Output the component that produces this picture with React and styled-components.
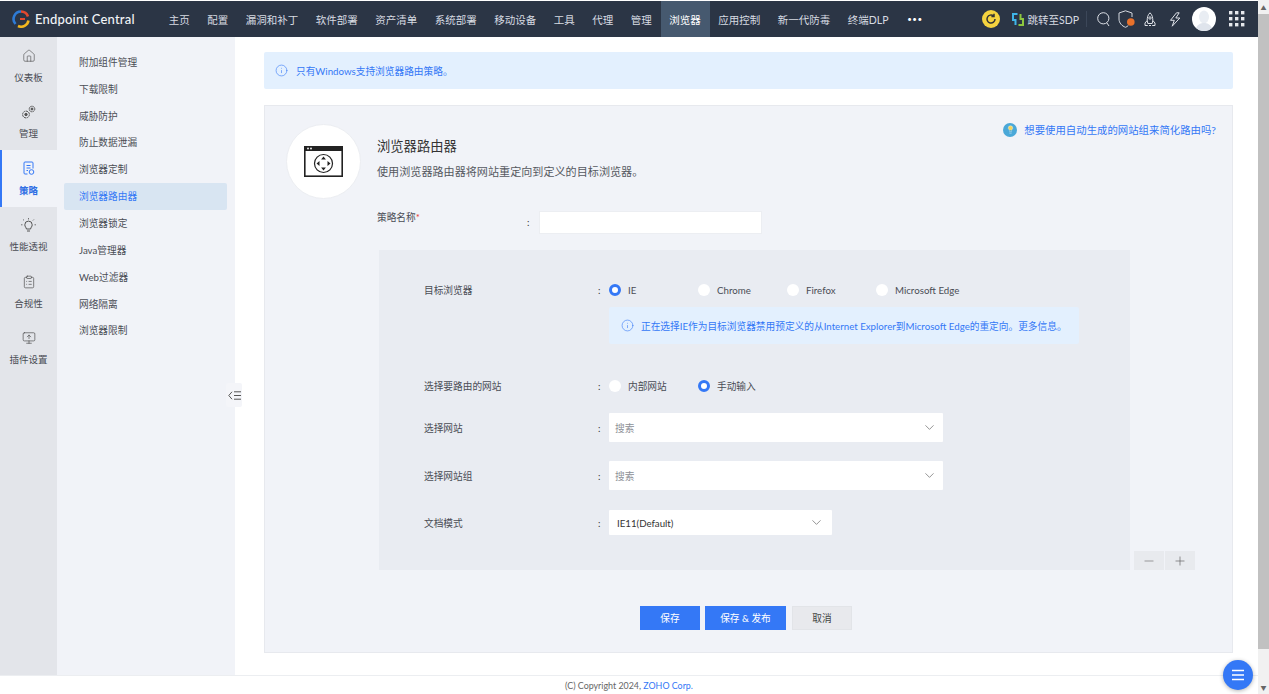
import styled, { createGlobalStyle } from "styled-components";
import { ChevronDown, ClipboardList, House, Info, Lightbulb, Minus, MonitorUp, Plus } from "lucide-react";

const GlobalStyle = createGlobalStyle`
  html, body {
    margin: 0;
    height: 100%;
    overflow: hidden;
    background: #fff;
  }
  body {
    font-family: Lato, "Noto Sans CJK SC", sans-serif;
    font-size: 9.7px;
    color: #4a4d55;
  }
  * {
    box-sizing: border-box;
  }
`;

const navItems = [
  "主页",
  "配置",
  "漏洞和补丁",
  "软件部署",
  "资产清单",
  "系统部署",
  "移动设备",
  "工具",
  "代理",
  "管理",
  "浏览器",
  "应用控制",
  "新一代防毒",
  "终端DLP",
];

const subItems = [
  "附加组件管理",
  "下载限制",
  "威胁防护",
  "防止数据泄漏",
  "浏览器定制",
  "浏览器路由器",
  "浏览器锁定",
  "Java管理器",
  "Web过滤器",
  "网络隔离",
  "浏览器限制",
];

function GearsIcon() {
  return (
    <svg width="15" height="15" viewBox="0 0 15 15" fill="none" stroke="#555" strokeWidth="1">
      <circle cx="5" cy="9.5" r="3.4" strokeDasharray="2 .6" />
      <circle cx="5" cy="9.5" r="1.2" fill="#555" />
      <circle cx="11" cy="4" r="2.8" strokeDasharray="1.6 .6" />
      <circle cx="11" cy="4" r="1" fill="#555" />
    </svg>
  );
}

function PolicyIcon() {
  return (
    <svg width="14" height="15" viewBox="0 0 14 15" fill="none" stroke="#3478f6" strokeWidth="1">
      <path d="M5.5 13H3a1 1 0 0 1-1-1V2a1 1 0 0 1 1-1h7a1 1 0 0 1 1 1v5.5" />
      <path d="M4.5 4.5h4M4.5 7h4M4.5 9.5h1.5" />
      <circle cx="9.5" cy="11" r="2.3" />
    </svg>
  );
}

function BulbRays() {
  return (
    <svg width="15" height="15" viewBox="0 0 15 15" fill="none" stroke="#555" strokeWidth="1">
      <path d="M5.4 11c0-1.5-1.6-2.2-1.6-4.2a3.7 3.7 0 0 1 7.4 0c0 2-1.6 2.7-1.6 4.2z" />
      <path d="M6 13h3M7.5 .2v1.2M1.4 6.800H.2M14.800 6.800h-1.200M3 2.400l-.8-.8M12 2.400l.8-.8" />
    </svg>
  );
}

function RouterIcon() {
  return (
    <svg width="39" height="31" viewBox="0 0 39 31" fill="none">
      <rect x=".8" y=".8" width="37.400" height="29.400" fill="#fff" stroke="#222" strokeWidth="1.600" />
      <rect x="0" y="0" width="39" height="5" fill="#222" />
      <circle cx="4" cy="2.500" r=".9" fill="#fff" />
      <circle cx="7" cy="2.500" r=".9" fill="#fff" />
      <circle cx="19.500" cy="17.500" r="9" stroke="#222" strokeWidth="1.200" />
      <path
        d="M19.500 10.500l2.400 3h-4.800zM19.500 24.500l2.400-3h-4.800zM12.500 17.500l3-2.400v4.800zM26.500 17.500l-3-2.400v4.800z"
        fill="#222"
      />
    </svg>
  );
}

function SdpLogo() {
  return (
    <svg width="12" height="13" viewBox="0 0 12 13" fill="none" strokeWidth="2">
      <path d="M5.500 1H1v6h2.500v5" stroke="#3fb5e8" />
      <path d="M6.500 12H11V6H8.500V1" stroke="#8cc63f" />
    </svg>
  );
}

function SearchIcon() {
  return (
    <svg width="13" height="15" viewBox="0 0 13 15" fill="none" stroke="#dfe2e8" strokeWidth="1">
      <circle cx="6.300" cy="6.300" r="5.600" />
      <path d="M9.800 10.800 12 14" />
    </svg>
  );
}

function ShieldIcon() {
  return (
    <svg width="18" height="18" viewBox="0 0 18 18" fill="none">
      <path
        d="M7.500 .8 1 3v6c0 4 3 7 6.500 8.300 1-.4 2-1 2.800-1.800M7.500 .8 14 3v4"
        stroke="#d5d9e0"
        strokeWidth="1"
      />
      <circle cx="12.800" cy="12" r="3.800" fill="#e8712b" />
    </svg>
  );
}

function RocketIcon() {
  return (
    <svg width="12" height="15" viewBox="0 0 12 15" fill="none" stroke="#dfe2e8" strokeWidth="1">
      <path d="M6 .8C3.800 2.800 3.200 5.500 3.200 8.500l.6 3h4.400l.6-3C8.800 5.500 8.200 2.800 6 .8z" />
      <circle cx="6" cy="6" r="1.200" />
      <path d="M3.200 8.500 1 11v2.500h2.800M8.800 8.500 11 11v2.500H8.200M5 13.500h2" />
    </svg>
  );
}

function BoltIcon() {
  return (
    <svg width="12" height="15" viewBox="0 0 12 15" fill="none" stroke="#dfe2e8" strokeWidth="1">
      <path d="M7.500.8 1.500 8.300h3.800L3.200 14.200 10.800 6H6.800l3.400-5.200z" strokeLinejoin="round" />
    </svg>
  );
}

function AppsIcon() {
  const dots = [];
  for (let r = 0; r < 3; r++) {
    for (let c = 0; c < 3; c++) {
      dots.push(<rect key={`${r}${c}`} x={c * 6} y={r * 6} width="3.400" height="3.400" fill="#e6e8ec" />);
    }
  }
  return (
    <svg width="16" height="16" viewBox="0 0 16 16">
      {dots}
    </svg>
  );
}

function AvatarIcon() {
  return (
    <svg width="24" height="24" viewBox="0 0 24 24">
      <circle cx="12" cy="12" r="12" fill="#fff" />
      <ellipse cx="12" cy="10" rx="5" ry="6.500" fill="#e9edf3" />
      <path d="M4 21c2-4 5-5 8-5s6 1 8 5a12 12 0 0 1-16 0z" fill="#dfe4ec" />
    </svg>
  );
}

function App() {
  return (
    <Screen>
      <GlobalStyle />
      <Page>
        <TopBar>
          <Logo>
            <svg width="18" height="18" viewBox="0 0 18 18" fill="none" strokeWidth="2.600">
              <path d="M9 1.500A7.500 7.500 0 0 0 3.500 14" stroke="#2e7bd6" />
              <path d="M9 1.500A7.500 7.500 0 0 1 16 6.500" stroke="#e2492f" />
              <path d="M16.500 10.500A7.500 7.500 0 0 1 6 16" stroke="#f4b81e" />
              <path d="M8 9h5" stroke="#e2492f" strokeWidth="2" />
            </svg>
            <span>Endpoint Central</span>
          </Logo>
          <Nav>
            {navItems.map((item) => (
              <NavItem key={item} $active={item === "浏览器"}>
                {item}
              </NavItem>
            ))}
            <MoreDots>•••</MoreDots>
          </Nav>
          <TopActions>
            <Coin>
              <svg width="12" height="12" viewBox="0 0 12 12" fill="none" stroke="#333" strokeWidth="1.500">
                <path d="M10 6a4 4 0 1 1-1.400-3M9 .8v2.600H6.400" />
              </svg>
            </Coin>
            <ActionSlot $gap={12}>
              <SdpLink>
                <SdpLogo />
                <span>跳转至SDP</span>
              </SdpLink>
            </ActionSlot>
            <ActionSlot $gap={7}>
              <Divider />
            </ActionSlot>
            <ActionSlot $gap={10}>
              <SearchIcon />
            </ActionSlot>
            <ActionSlot $gap={8}>
              <ShieldIcon />
            </ActionSlot>
            <ActionSlot $gap={8}>
              <RocketIcon />
            </ActionSlot>
            <ActionSlot $gap={13}>
              <BoltIcon />
            </ActionSlot>
            <ActionSlot $gap={11}>
              <AvatarIcon />
            </ActionSlot>
            <ActionSlot $gap={13}>
              <AppsIcon />
            </ActionSlot>
          </TopActions>
        </TopBar>

        <Body>
          <Rail>
            <RailItem>
              <RailIcon>
                <House size={14} strokeWidth={1} color="#444" />
              </RailIcon>
              <span>仪表板</span>
            </RailItem>
            <RailItem>
              <RailIcon>
                <GearsIcon />
              </RailIcon>
              <span>管理</span>
            </RailItem>
            <RailItem $active>
              <RailIcon>
                <PolicyIcon />
              </RailIcon>
              <span>策略</span>
            </RailItem>
            <RailItem>
              <RailIcon>
                <BulbRays />
              </RailIcon>
              <span>性能透视</span>
            </RailItem>
            <RailItem>
              <RailIcon>
                <ClipboardList size={14} strokeWidth={1.1} color="#444" />
              </RailIcon>
              <span>合规性</span>
            </RailItem>
            <RailItem>
              <RailIcon>
                <MonitorUp size={14} strokeWidth={1.1} color="#444" />
              </RailIcon>
              <span>插件设置</span>
            </RailItem>
          </Rail>

          <SubMenu>
            {subItems.map((item) => (
              <SubItem key={item} $active={item === "浏览器路由器"}>
                {item}
              </SubItem>
            ))}
            <CollapseHandle>
              <svg width="13" height="9" viewBox="0 0 13 9" fill="none" stroke="#555" strokeWidth="1">
                <path d="M4 .8.800 4.500 4 8.200M6 .8h7M6 4.500h7M6 8.200h7" />
              </svg>
            </CollapseHandle>
          </SubMenu>

          <Main>
            <Notice>
              <Info size={13} strokeWidth={1.1} color="#3478f6" />
              <span>只有Windows支持浏览器路由策略。</span>
            </Notice>

            <Panel>
              <PanelHead>
                <IconCircle>
                  <RouterIcon />
                </IconCircle>
                <HeadText>
                  <Title>浏览器路由器</Title>
                  <Desc>使用浏览器路由器将网站重定向到定义的目标浏览器。</Desc>
                </HeadText>
                <Hint>
                  <HintBulb>
                    <Lightbulb size={9} color="#fff" fill="#f6d55c" strokeWidth={1} />
                  </HintBulb>
                  <span>想要使用自动生成的网站组来简化路由吗?</span>
                </Hint>
              </PanelHead>

              <NameRow>
                <NameLabel>
                  策略名称<Required>*</Required>
                </NameLabel>
                <NameColon>:</NameColon>
                <NameInput />
              </NameRow>

              <SectionRow>
                <Section>
                  <Row>
                    <Label>目标浏览器</Label>
                    <Colon>:</Colon>
                    <RadioOption $checked>IE</RadioOption>
                    <RadioOption>Chrome</RadioOption>
                    <RadioOption>Firefox</RadioOption>
                    <RadioOption>Microsoft Edge</RadioOption>
                  </Row>
                  <InfoBox>
                    <Info size={13} strokeWidth={1.1} color="#3478f6" />
                    <span>正在选择IE作为目标浏览器禁用预定义的从Internet Explorer到Microsoft Edge的重定向。更多信息。</span>
                  </InfoBox>
                  <Row $gap={35}>
                    <Label>选择要路由的网站</Label>
                    <Colon>:</Colon>
                    <RadioOption>内部网站</RadioOption>
                    <RadioOption $checked>手动输入</RadioOption>
                  </Row>
                  <Row $gap={20}>
                    <Label>选择网站</Label>
                    <Colon>:</Colon>
                    <SelectBox>
                      <Placeholder>搜索</Placeholder>
                      <ChevronDown size={15} strokeWidth={1} color="#555" />
                    </SelectBox>
                  </Row>
                  <Row $gap={19}>
                    <Label>选择网站组</Label>
                    <Colon>:</Colon>
                    <SelectBox>
                      <Placeholder>搜索</Placeholder>
                      <ChevronDown size={15} strokeWidth={1} color="#555" />
                    </SelectBox>
                  </Row>
                  <Row $gap={20}>
                    <Label>文档模式</Label>
                    <Colon>:</Colon>
                    <SelectBox $small>
                      <span>IE11(Default)</span>
                      <ChevronDown size={15} strokeWidth={1} color="#555" />
                    </SelectBox>
                  </Row>
                </Section>
                <Stepper>
                  <StepButton>
                    <Minus size={14} strokeWidth={1.2} color="#777" />
                  </StepButton>
                  <StepButton>
                    <Plus size={14} strokeWidth={1.2} color="#666" />
                  </StepButton>
                </Stepper>
              </SectionRow>

              <Actions>
                <PrimaryButton $width={60}>保存</PrimaryButton>
                <PrimaryButton $width={81}>保存 &amp; 发布</PrimaryButton>
                <CancelButton>取消</CancelButton>
              </Actions>
            </Panel>
          </Main>
        </Body>

        <Footer>
          (C) Copyright 2024,&nbsp;<FooterLink>ZOHO Corp.</FooterLink>
        </Footer>
      </Page>

      <Scrollbar>
        <ScrollArrow>▲</ScrollArrow>
        <ScrollThumb />
        <ScrollArrow>▼</ScrollArrow>
      </Scrollbar>

      <Fab>
        <svg width="14" height="12" viewBox="0 0 14 12" fill="none" stroke="#fff" strokeWidth="1.300">
          <path d="M1 1.500h12M1 6h12M1 10.500h12" />
        </svg>
      </Fab>
    </Screen>
  );
}

const Screen = styled.div`
  display: flex;
  width: 100%;
  height: 694px;
  position: relative;
  overflow: hidden;
`;

const Page = styled.div`
  flex: 1;
  min-width: 0;
  display: flex;
  flex-direction: column;
  padding-top: 1px;
`;

const TopBar = styled.header`
  height: 36px;
  flex: none;
  display: flex;
  align-items: center;
  background: #2b3545;
  padding-left: 12px;
  font-size: 10.5px;
  color: #d7dbe2;
`;

const Logo = styled.div`
  display: flex;
  align-items: center;
  gap: 5px;
  width: 148px;
  flex: none;
  font-size: 13px;
  font-weight: 500;
  letter-spacing: 0.2px;
  color: #f2f4f7;
`;

const Nav = styled.nav`
  display: flex;
  align-items: stretch;
  height: 100%;
`;

const NavItem = styled.div`
  display: flex;
  align-items: center;
  padding: 0 8.750px;
  background: ${(props) => (props.$active ? "#46596f" : "transparent")};
  color: ${(props) => (props.$active ? "#fff" : "#d7dbe2")};
`;

const MoreDots = styled.div`
  display: flex;
  align-items: center;
  padding-left: 10px;
  font-size: 8px;
  letter-spacing: 0.5px;
  color: #fff;
`;

const TopActions = styled.div`
  margin-left: auto;
  display: flex;
  align-items: center;
  padding-right: 13px;
`;

const ActionSlot = styled.div`
  display: flex;
  align-items: center;
  margin-left: ${(props) => props.$gap}px;
`;

const Coin = styled.div`
  width: 18px;
  height: 18px;
  border-radius: 50%;
  background: #f5d33f;
  display: flex;
  align-items: center;
  justify-content: center;
`;

const SdpLink = styled.div`
  display: flex;
  align-items: center;
  gap: 4px;
`;

const Divider = styled.div`
  width: 1px;
  height: 16px;
  background: #3c4759;
`;

const Body = styled.div`
  flex: 1;
  min-height: 0;
  display: flex;
`;

const Rail = styled.aside`
  width: 57px;
  flex: none;
  background: #e3e5ea;
`;

const RailItem = styled.div`
  height: 56.500px;
  display: flex;
  flex-direction: column;
  align-items: center;
  padding-top: 11px;
  gap: 6.500px;
  background: ${(props) => (props.$active ? "#f1f3f8" : "transparent")};
  border-left: 2px solid ${(props) => (props.$active ? "#3478f6" : "transparent")};
  padding-right: 2px;
  font-size: 9.500px;
  color: ${(props) => (props.$active ? "#2f6fe4" : "#4a4d55")};
  font-weight: ${(props) => (props.$active ? 700 : 400)};
`;

const RailIcon = styled.div`
  height: 15px;
  display: flex;
  align-items: center;
  justify-content: center;
`;

const SubMenu = styled.aside`
  width: 178px;
  flex: none;
  background: #f1f3f8;
  padding: 11.500px 8px 0 7px;
  position: relative;
`;

const SubItem = styled.div`
  height: 26.850px;
  display: flex;
  align-items: center;
  padding-left: 15px;
  border-radius: 2px;
  background: ${(props) => (props.$active ? "#d8e5f2" : "transparent")};
  color: ${(props) => (props.$active ? "#3478f6" : "#4a4d55")};
`;

const CollapseHandle = styled.div`
  position: absolute;
  top: 346px;
  right: -7px;
  width: 16px;
  height: 24px;
  background: #f4f5f9;
  border-radius: 2px;
  display: flex;
  align-items: center;
  justify-content: center;
`;

const Main = styled.main`
  flex: 1;
  min-width: 0;
  padding: 15px 25px 0 29px;
`;

const Notice = styled.div`
  height: 37px;
  display: flex;
  align-items: center;
  gap: 8px;
  padding-left: 11px;
  background: #e3f0fe;
  border-radius: 2px;
  color: #3478f6;
`;

const Panel = styled.section`
  margin-top: 16px;
  height: 548px;
  background: #f1f3f8;
  border: 1px solid #e7e9ee;
`;

const PanelHead = styled.div`
  display: flex;
  align-items: center;
  padding: 18px 16px 0 21px;
`;

const IconCircle = styled.div`
  width: 75px;
  height: 75px;
  flex: none;
  border-radius: 50%;
  background: #fff;
  border: 1px solid #eceef2;
  display: flex;
  align-items: center;
  justify-content: center;
`;

const HeadText = styled.div`
  margin: 0 0 6px 16px;
  display: flex;
  flex-direction: column;
  gap: 9px;
`;

const Title = styled.div`
  font-size: 13.300px;
  line-height: 18px;
  color: #333;
`;

const Desc = styled.div`
  font-size: 11.100px;
  line-height: 16px;
  color: #55585f;
`;

const Hint = styled.div`
  margin-left: auto;
  align-self: flex-start;
  margin-top: -2px;
  display: flex;
  align-items: center;
  gap: 7px;
  font-size: 10.400px;
  color: #3478f6;
`;

const HintBulb = styled.div`
  width: 14px;
  height: 14px;
  border-radius: 50%;
  background: #4aa8d8;
  display: flex;
  align-items: center;
  justify-content: center;
`;

const NameRow = styled.div`
  display: flex;
  align-items: flex-start;
  margin-top: 12px;
  padding-left: 112px;
`;

const NameLabel = styled.div`
  width: 150px;
  line-height: 13px;
`;

const Required = styled.span`
  color: #e53935;
`;

const NameColon = styled.div`
  width: 11px;
  flex: none;
  line-height: 23px;
  color: #333;
`;

const Colon = styled.div`
  width: 11px;
  flex: none;
  line-height: 14px;
  color: #333;
`;

const NameInput = styled.div`
  width: 223px;
  height: 23px;
  margin-left: 1px;
  background: #fff;
  border: 1px solid #eceef2;
`;

const SectionRow = styled.div`
  display: flex;
  align-items: flex-end;
  gap: 4px;
  margin-top: 16px;
  padding-left: 114px;
`;

const Section = styled.div`
  width: 751px;
  height: 320px;
  padding: 33px 0 0 45px;
  background: #e9ecf2;
`;

const Row = styled.div`
  display: flex;
  align-items: center;
  margin-top: ${(props) => props.$gap || 0}px;
`;

const Label = styled.div`
  width: 174px;
  flex: none;
`;

const RadioOption = styled.div`
  width: 89px;
  display: flex;
  align-items: center;
  gap: 7px;
  line-height: 14px;

  &::before {
    content: "";
    box-sizing: border-box;
    width: 12px;
    height: 12px;
    flex: none;
    border-radius: 50%;
    background: #fff;
    border: ${(props) => (props.$checked ? "3.500px solid #3478f6" : "none")};
  }
`;

const InfoBox = styled.div`
  width: 470px;
  height: 37px;
  margin: 10px 0 0 185px;
  padding-left: 12px;
  display: flex;
  align-items: center;
  gap: 7px;
  background: #e3f0fe;
  border-radius: 2px;
  color: #3478f6;
  white-space: nowrap;
`;

const SelectBox = styled.div`
  width: ${(props) => (props.$small ? 223 : 334)}px;
  height: ${(props) => (props.$small ? 25 : 29)}px;
  padding: 0 ${(props) => (props.$small ? 8 : 6)}px;
  display: flex;
  align-items: center;
  justify-content: space-between;
  background: #fff;
  border-radius: 1px;
  color: #333;
`;

const Placeholder = styled.span`
  color: #8d9097;
`;

const Stepper = styled.div`
  display: flex;
  gap: 1px;
`;

const StepButton = styled.div`
  width: 30px;
  height: 19px;
  display: flex;
  align-items: center;
  justify-content: center;
  background: #e8eaee;
`;

const Actions = styled.div`
  display: flex;
  gap: 5px;
  margin-top: 36px;
  padding-left: 375px;
`;

const PrimaryButton = styled.button`
  width: ${(props) => props.$width}px;
  height: 24px;
  padding: 0;
  border: none;
  background: #3478f6;
  color: #fff;
  font: inherit;
`;

const CancelButton = styled.button`
  width: 60px;
  height: 24px;
  margin-left: 1px;
  padding: 0;
  border: 1px solid #e2e4e8;
  background: #e8e9ed;
  color: #444;
  font: inherit;
`;

const Footer = styled.footer`
  height: 19px;
  flex: none;
  display: flex;
  align-items: center;
  justify-content: center;
  border-top: 1px solid #eceef1;
  background: #fff;
  font-size: 8.900px;
  color: #666;
`;

const FooterLink = styled.span`
  color: #3478f6;
`;

const Scrollbar = styled.div`
  width: 11px;
  flex: none;
  display: flex;
  flex-direction: column;
  background: #f1f1f1;
`;

const ScrollArrow = styled.div`
  height: 14px;
  flex: none;
  display: flex;
  align-items: center;
  justify-content: center;
  font-size: 6px;
  color: #666;
`;

const ScrollThumb = styled.div`
  height: 635px;
  background: #c1c1c1;
  margin-bottom: auto;
`;

const Fab = styled.div`
  position: absolute;
  left: 1223px;
  top: 660px;
  width: 30px;
  height: 30px;
  border-radius: 50%;
  background: #3478f6;
  box-shadow: 0 1px 4px rgba(0, 0, 0, 0.3);
  display: flex;
  align-items: center;
  justify-content: center;
`;

export default App;
